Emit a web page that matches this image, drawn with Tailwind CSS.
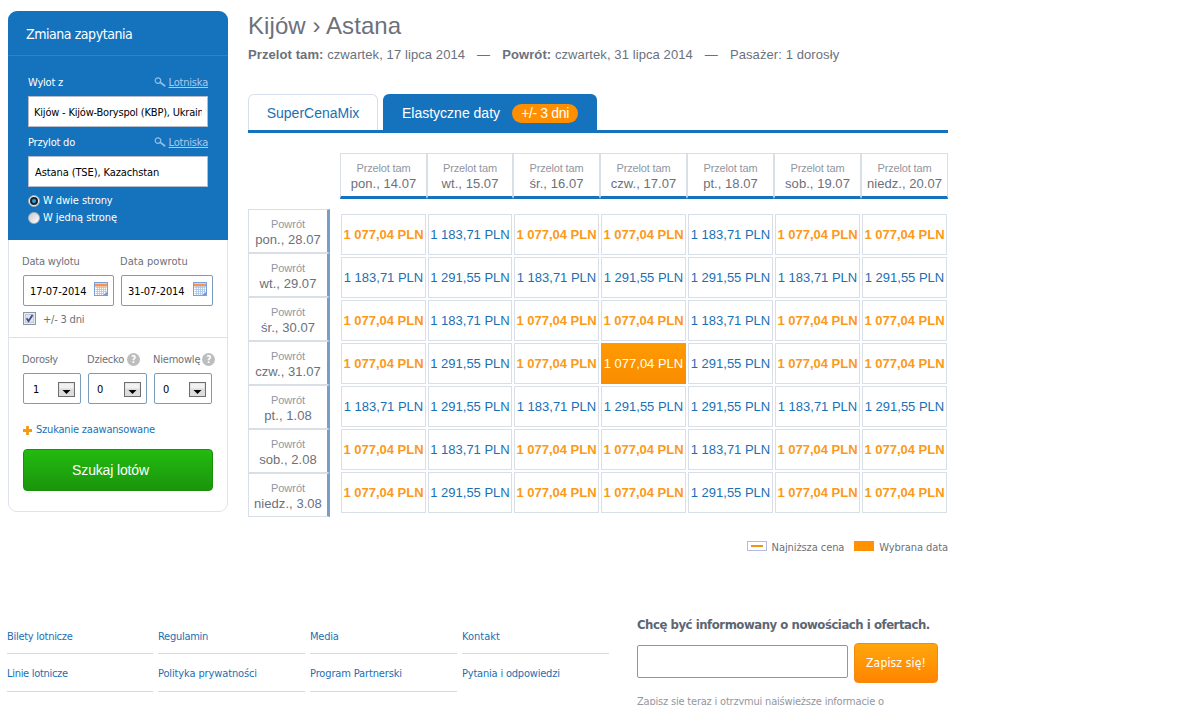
<!DOCTYPE html>
<html lang="pl">
<head>
    <meta charset="utf-8">
    <title>Kijów › Astana</title>
    <script src="https://cdn.jsdelivr.net/npm/@tailwindcss/browser@4"></script>
</head>
<body class="bg-white h-[705px] overflow-hidden text-[11px] leading-[14px] text-[#6b717c] font-['DejaVu_Sans_Condensed','DejaVu_Sans',sans-serif] tracking-[-0.2px]">
<svg class="hidden">
    <symbol id="lens" viewBox="0 0 12 10">
        <circle cx="4" cy="3.6" r="2.8" fill="none" stroke="#8fc0e8" stroke-width="1.2"/>
        <path d="M6.3 5.4 10.6 8.8" stroke="#8fc0e8" stroke-width="1.8" stroke-linecap="round"/>
    </symbol>
    <symbol id="calendar" viewBox="0 0 14 14">
        <rect x=".5" y=".5" width="13" height="13" fill="#fff" stroke="#7ba0d8"/>
        <path d="M1 3h12" stroke="#ef9557" stroke-width="3"/>
        <path d="M1.5 5.5h11M1.5 7.5h11M1.5 9.5h11M1.5 11.5h8M3.5 4v9M5.5 4v9M7.5 4v9M9.5 4v9M11.5 4v7" stroke="#a9c4e8" stroke-width=".8"/>
        <path d="M13 10v3h-4z" fill="#6f9ad6"/>
    </symbol>
    <symbol id="arrow" viewBox="0 0 17 15">
        <rect x=".5" y=".5" width="16" height="14" fill="#dcdcdc" stroke="#6e6e6e"/>
        <path d="M1.5 1.5h14v5h-14z" fill="#f1f1f1"/>
        <path d="M4.500 8h8l-4 4z"/>
    </symbol>
</svg>

<div class="flex pl-2 pt-[11px]">
    <!-- search form -->
    <form class="w-[220px] h-[501px] shrink-0 rounded-[9px] border border-[#dfe3ef]">
        <div class="-mx-px -mt-px h-[229px] rounded-t-[9px] bg-[#1572bd] text-white">
            <h2 class="h-[45px] border-b border-[#2b83ca] pl-[18px] pt-[14px] text-[14px] leading-[18px] tracking-[-0.45px]">Zmiana zapytania</h2>
            <div class="px-5 pt-5">
                <div class="flex justify-between">
                    <label>Wylot z</label>
                    <a class="flex text-[#a9cbee]"><svg class="w-3 h-[10px] mt-px mr-[3px]"><use href="#lens"/></svg><span class="underline">Lotniska</span></a>
                </div>
                <div class="mt-[6px] h-[31px] border border-[#b5bccb] bg-white px-[5px] text-black leading-[31px]"><div class="h-[29px] overflow-hidden whitespace-nowrap">Kijów - Kijów-Boryspol (KBP), Ukraina</div></div>
                <div class="mt-[9px] flex justify-between">
                    <label>Przylot do</label>
                    <a class="flex text-[#a9cbee]"><svg class="w-3 h-[10px] mt-px mr-[3px]"><use href="#lens"/></svg><span class="underline">Lotniska</span></a>
                </div>
                <div class="mt-[6px] h-[31px] border border-[#b5bccb] bg-white px-[6px] text-black leading-[31px] tracking-[-0.1px]">Astana (TSE), Kazachstan</div>
                <label class="mt-[7px] flex items-center h-[14px] tracking-[-0.05px]">
                    <span class="mr-[3px] flex size-3 items-center justify-center rounded-full border border-[#9aa7b5] bg-[#eef1f4]"><i class="size-[8px] rounded-full border-2 border-[#16212e] bg-[#36a0d0]"></i></span>W dwie strony
                </label>
                <label class="mt-[3px] flex items-center h-[14px] tracking-[-0.05px]">
                    <span class="mr-[3px] size-3 rounded-full border border-[#aab2bc] bg-linear-to-br from-[#c9c9c9] to-white"></span>W jedną stronę
                </label>
            </div>
        </div>

        <div class="h-[98px] border-b border-[#dbe0ea] px-[13px] pt-[15px]">
            <div class="flex">
                <label class="w-[98px]">Data wylotu</label>
                <label class="tracking-[0.05px]">Data powrotu</label>
            </div>
            <div class="mt-[6px] ml-px flex gap-[7px] text-black">
                <div class="flex h-[31px] w-[91px] items-center justify-between rounded-[2px] border border-[#7b9dbc] pl-[6px] pr-[5px] tracking-[-0.1px]"><span class="pt-[2px]">17-07-2014</span><svg class="size-[14px] -mt-[3px]"><use href="#calendar"/></svg></div>
                <div class="flex h-[31px] w-[92px] items-center justify-between rounded-[2px] border border-[#7b9dbc] pl-[6px] pr-[5px] tracking-[-0.1px]"><span class="pt-[2px]">31-07-2014</span><svg class="size-[14px] -mt-[3px]"><use href="#calendar"/></svg></div>
            </div>
            <label class="mt-[6px] ml-px flex">
                <svg class="size-[13px] mr-[7px]" viewBox="0 0 13 13"><rect x=".5" y=".5" width="12" height="12" fill="#e9ecf0" stroke="#8b96a8"/><rect x="2.5" y="2.5" width="8" height="8" fill="#dfe3ea" stroke="#c3c9d3"/><path d="M3.6 6.3 5.5 9.2 9.5 3" fill="none" stroke="#3a4d8c" stroke-width="1.8"/></svg><span class="pt-px">+/- 3 dni</span>
            </label>
        </div>

        <div class="px-[13px] pt-[15px]">
            <div class="flex">
                <label class="w-[65px] shrink-0">Dorosły</label>
                <label class="flex w-[66px] shrink-0">Dziecko<span class="ml-[3px] size-[13px] rounded-full bg-[#bdbdbd] text-center font-bold text-[10px] leading-[13px] text-white">?</span></label>
                <label class="flex">Niemowlę<span class="ml-[2px] size-[13px] shrink-0 rounded-full bg-[#bdbdbd] text-center font-bold text-[10px] leading-[13px] text-white">?</span></label>
            </div>
            <div class="mt-[6px] ml-px flex gap-[7px] text-black">
                <div class="flex h-[31px] w-[58px] items-center justify-between rounded-[2px] border border-[#7b9dbc] pl-[9px] pr-[5px]"><span class="pt-[2px]">1</span><svg class="mt-px h-[15px] w-[17px]"><use href="#arrow"/></svg></div>
                <div class="flex h-[31px] w-[59px] items-center justify-between rounded-[2px] border border-[#7b9dbc] pl-[8px] pr-[5px]"><span class="pt-[2px]">0</span><svg class="mt-px h-[15px] w-[17px]"><use href="#arrow"/></svg></div>
                <div class="flex h-[31px] w-[58px] items-center justify-between rounded-[2px] border border-[#7b9dbc] pl-[8px] pr-[5px]"><span class="pt-[2px]">0</span><svg class="mt-px h-[15px] w-[17px]"><use href="#arrow"/></svg></div>
            </div>
            <a class="mt-[19px] ml-px flex items-center text-[#1a6fb5]">
                <svg class="size-[9px] mr-[4px]" viewBox="0 0 9 9"><path d="M4.500 0v9M0 4.500h9" stroke="#f39a12" stroke-width="2.800"/></svg>Szukanie zaawansowane
            </a>
            <button type="button" class="mt-[12px] ml-px h-[42px] w-[190px] rounded-[4px] border border-[#1b8f0c] bg-linear-to-b from-[#23bb10] to-[#1a950b] pr-[15px] font-['Liberation_Sans',sans-serif] text-[14px] tracking-[-0.15px] text-white">Szukaj lotów</button>
        </div>
    </form>

    <!-- results -->
    <main class="ml-5 w-[700px] font-['Liberation_Sans',Arial,sans-serif] tracking-normal">
        <h1 class="mt-px text-[24px] leading-[28px] tracking-[0.08px]">Kijów › Astana</h1>
        <p class="mt-[7px] flex h-4 whitespace-pre text-[13px] leading-4 tracking-[0.09px]"><b>Przelot tam:</b> czwartek, 17 lipca 2014<span class="mx-3">—</span><b>Powrót:</b> czwartek, 31 lipca 2014<span class="mx-3">—</span>Pasażer: 1 dorosły</p>

        <div class="mt-[31px] flex h-[39px] gap-[5px] border-b-[3px] border-[#1572bd] text-[14px]">
            <a class="flex w-[130px] items-center justify-center rounded-t-[6px] border border-b-0 border-[#d8dfec] text-[#1a6fb5]">SuperCenaMix</a>
            <a class="flex w-[214px] items-center rounded-t-[6px] bg-[#1572bd] pl-[19px] pt-[2px] text-white"><span class="-mt-px">Elastyczne daty</span><span class="ml-3 h-[19px] w-[66px] rounded-full bg-[#ff8f00] text-center leading-[19px] tracking-[-0.35px]">+/- 3 dni</span></a>
        </div>

        <div class="mt-5 flex">
            <div id="returns" class="mt-14 mr-[10px] w-[82px] shrink-0"></div>
            <div class="w-[608px]">
                <div id="departures" class="grid h-[46px] grid-cols-[87px_86px_repeat(5,87px)]"></div>
                <div id="prices" class="mt-[15px] grid grid-cols-[85px_84px_repeat(5,85px)] gap-[2px] px-px text-[13px]"></div>
            </div>
        </div>

        <div class="mt-[23px] flex items-center justify-end font-['DejaVu_Sans_Condensed','DejaVu_Sans',sans-serif] tracking-[-0.08px]">
            <span class="mr-[5px] -mt-[3px] flex h-[10px] w-5 items-center justify-center border border-[#b3bce0]"><i class="h-[2px] w-3 bg-[#f0931a]"></i></span><span class="pt-px">Najniższa cena</span>
            <span class="ml-[10px] mr-[5px] -mt-[3px] h-[10px] w-5 bg-[#ff9200]"></span><span class="pt-px">Wybrana data</span>
        </div>
    </main>
</div>

<footer class="mt-[62px] flex pl-2">
    <div class="mt-[13px] grid grid-cols-[150px_152px_152px_147px] auto-rows-min text-[#1a6fb5]">
        <a class="-ml-px mr-[5px] h-[24px] border-b border-[#d5dbe6] tracking-[-0.28px]">Bilety lotnicze</a>
        <a class="mr-[5px] h-[24px] border-b border-[#d5dbe6] tracking-[-0.28px]">Regulamin</a>
        <a class="mr-[5px] h-[24px] border-b border-[#d5dbe6]">Media</a>
        <a class="h-[24px] border-b border-[#d5dbe6] tracking-[0px]">Kontakt</a>
        <a class="-ml-px mr-[5px] h-[38px] border-b border-[#d5dbe6] pt-[13px] tracking-[-0.3px]">Linie lotnicze</a>
        <a class="mr-[5px] h-[38px] border-b border-[#d5dbe6] pt-[13px] tracking-[-0.13px]">Polityka prywatności</a>
        <a class="mr-[5px] h-[38px] border-b border-[#d5dbe6] pt-[13px] tracking-[-0.14px]">Program Partnerski</a>
        <a class="pt-[13px]">Pytania i odpowiedzi</a>
    </div>
    <div class="ml-7">
        <h3 class="text-[13px] leading-4 font-bold tracking-[-0.46px] text-[#5d6673]">Chcę być informowany o nowościach i ofertach.</h3>
        <div class="mt-[10px] flex items-center gap-[6px]">
            <div class="h-[33px] w-[211px] rounded-[2px] border border-[#7b9dbc] -mt-1"></div>
            <button type="button" class="h-10 w-[84px] rounded-[4px] border border-[#f28a0c] bg-linear-to-b from-[#ffa60d] to-[#ff8400] text-[12px] tracking-[0.15px] text-white">Zapisz się!</button>
        </div>
        <p class="mt-[12px] text-[#93979f] tracking-[-0.2px]">Zapisz się teraz i otrzymuj najświeższe informacje o</p>
    </div>
</footer>

<script>
    const days = ['pon., 14.07', 'wt., 15.07', 'śr., 16.07', 'czw., 17.07', 'pt., 18.07', 'sob., 19.07', 'niedz., 20.07'];
    const backs = ['pon., 28.07', 'wt., 29.07', 'śr., 30.07', 'czw., 31.07', 'pt., 1.08', 'sob., 2.08', 'niedz., 3.08'];
    const amounts = {a: '1 077,04 PLN', b: '1 183,71 PLN', c: '1 291,55 PLN', s: '1 077,04 PLN'};
    const rows = ['abaabaa', 'bcbccbc', 'abaabaa', 'acascaa', 'bcbccbc', 'abaabaa', 'acaacaa'];

    document.getElementById('departures').innerHTML = days.map((d) => `
        <div class="border border-b-[3px] border-[#d8dfe8] border-b-[#1572bd] pt-[7px] text-center whitespace-nowrap">
            <div class="text-[11px] leading-[14px] tracking-[-0.15px] text-[#9296a0]">Przelot tam</div>
            <div class="pt-px text-[13px] leading-4 tracking-[0.05px]">${d}</div>
        </div>`).join('');

    document.getElementById('returns').innerHTML = backs.map((d) => `
        <div class="h-11 border border-r-[3px] border-[#d8dfe8] border-r-[#7b9cc5] pt-[7px] text-center whitespace-nowrap">
            <div class="text-[11px] leading-[14px] text-[#9296a0]">Powrót</div>
            <div class="pt-px text-[13px] leading-4 tracking-[0.05px]">${d}</div>
        </div>`).join('');

    const styles = {
        a: 'border border-[#d8dfe8] font-bold text-[#fb9a1a]',
        b: 'border border-[#d8dfe8] text-[#1a6fb5]',
        c: 'border border-[#d8dfe8] text-[#1a6fb5]',
        s: 'bg-linear-to-b from-[#ff9a00] to-[#f98c00] text-white'
    };
    document.getElementById('prices').innerHTML = rows.map((r) => [...r].map((p) =>
        `<div class="flex h-[41px] items-center justify-center whitespace-nowrap ${styles[p]}">${amounts[p]}</div>`
    ).join('')).join('');
</script>
</body>
</html>
